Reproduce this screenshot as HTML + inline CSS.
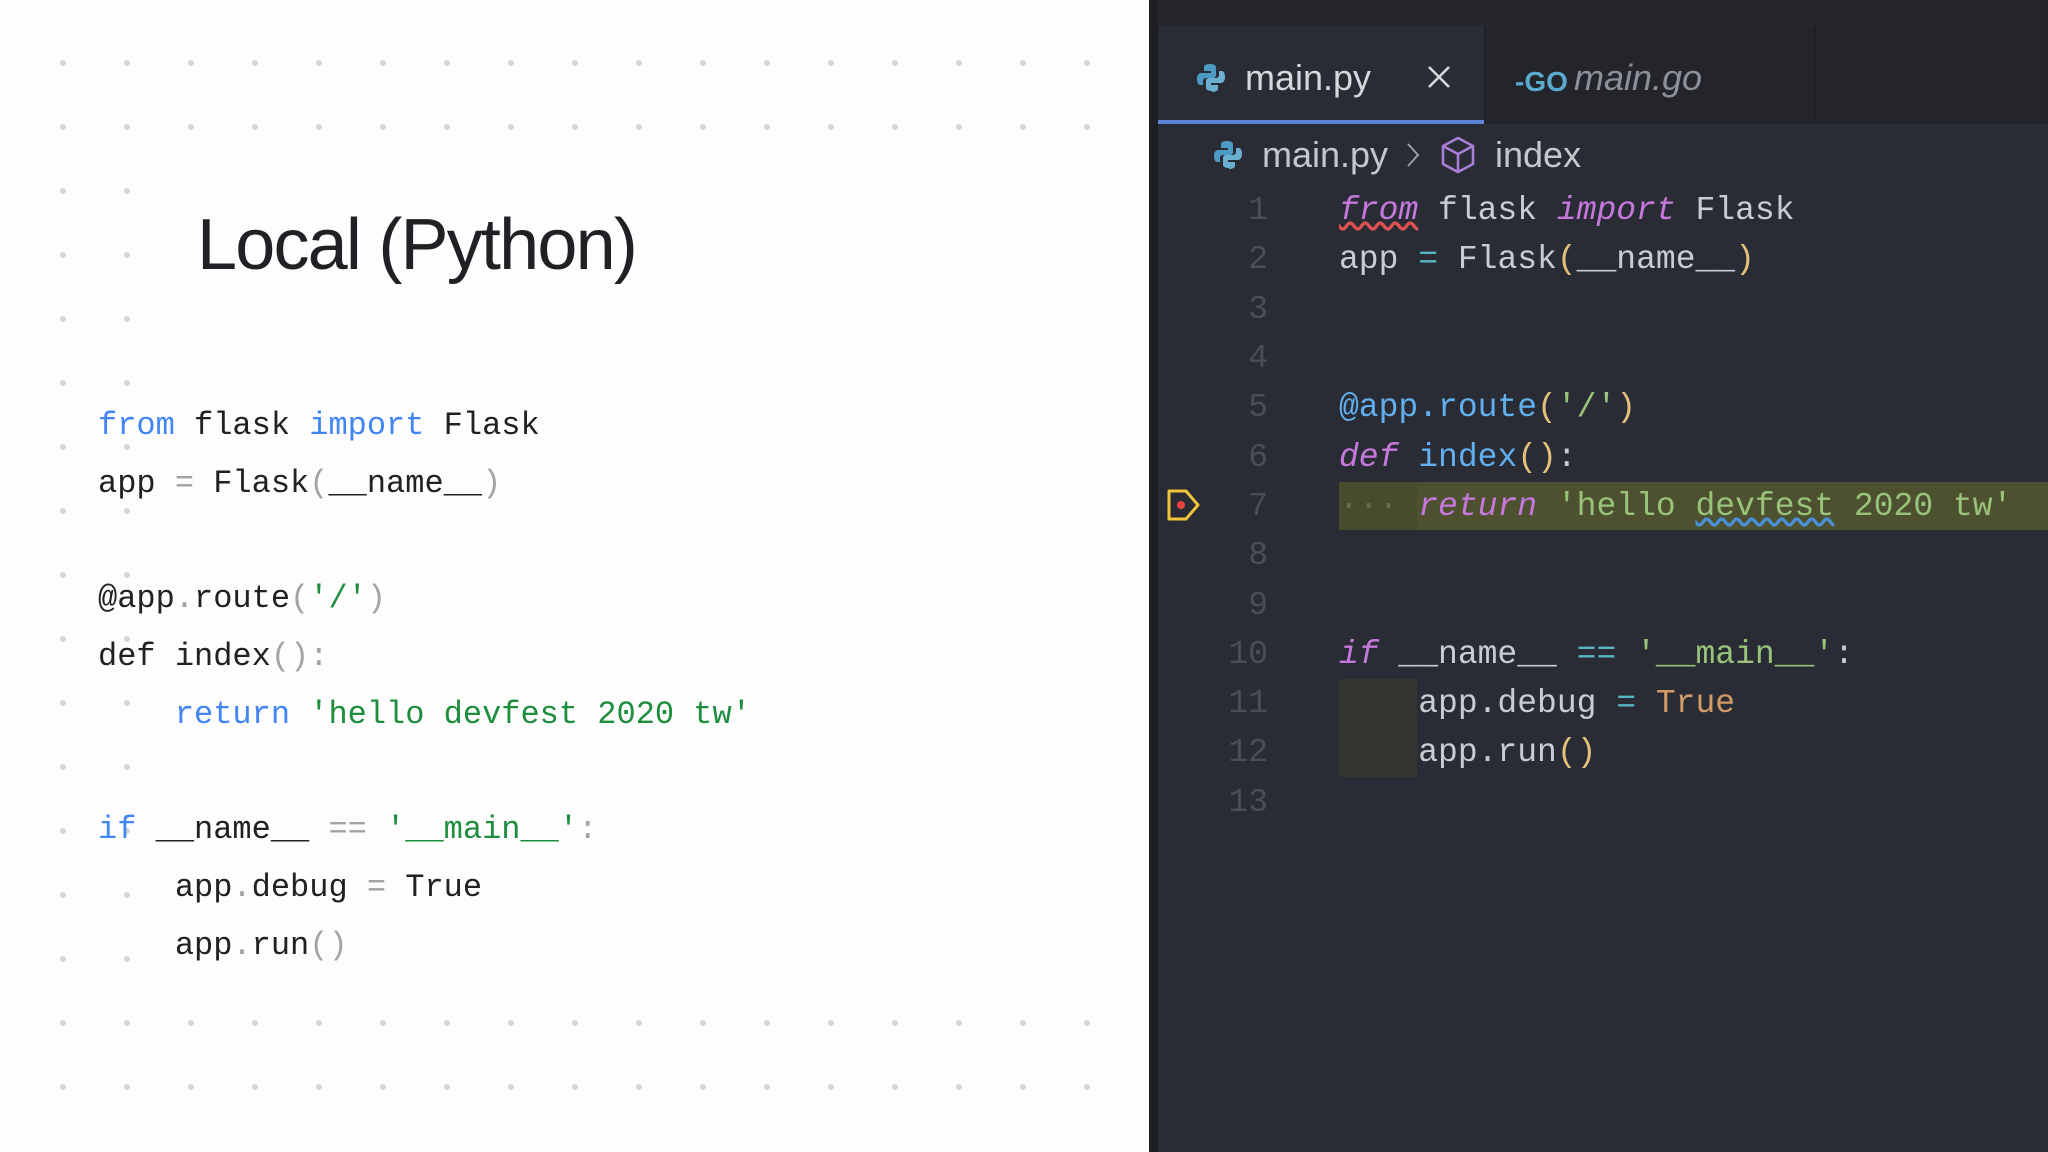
<!DOCTYPE html>
<html><head><meta charset="utf-8"><style>
*{margin:0;padding:0;box-sizing:border-box}
body{width:2048px;height:1152px;overflow:hidden;position:relative;background:#fdfdfd;font-family:"Liberation Sans",sans-serif}
.dots{position:absolute;background-image:radial-gradient(circle,#d6d6d6 2.6px,transparent 3.4px);background-size:64px 64px}
.title{position:absolute;left:197px;top:200px;font-size:72px;color:#202124;letter-spacing:-1.8px;line-height:90px}
.lc{position:absolute;left:98px;font-family:"Liberation Mono",monospace;font-size:32px;color:#202124;white-space:pre;height:58px;line-height:58px}
.k{color:#4285f4}.s{color:#1e8e3e}.p{color:#a0a4a8}
.right{position:absolute;left:1149px;top:0;width:899px;height:1152px;background:#2a2c35}
.border{position:absolute;left:1149px;top:0;width:9px;height:1152px;background:#1d1f24}
.topbar{position:absolute;left:1158px;top:0;width:890px;height:26px;background:#25272d}
.tabbar{position:absolute;left:1158px;top:26px;width:890px;height:98px;background:#23252b}
.tab1{position:absolute;left:1158px;top:26px;width:326px;height:98px;background:#2a2c35;border-bottom:4px solid #5a84d6}
.sep{position:absolute;top:26px;width:2px;height:98px;background:#1e2025}
.ui{position:absolute;font-size:36px;color:#d6d8dc;line-height:40px}
.ln{position:absolute;width:118px;left:1150px;text-align:right;font-family:"Liberation Mono",monospace;font-size:33px;color:#4a4e58;height:49.3px;line-height:49.3px}
.rc{position:absolute;left:1339px;font-family:"Liberation Mono",monospace;font-size:33px;color:#c9ccd3;white-space:pre;height:49.3px;line-height:49.3px}
.pk{color:#c678dd;font-style:italic}.eq{color:#56b6c2}.py{color:#e5c07b}.bl{color:#61afef}.gr{color:#98c379}.or{color:#d19a66}.ws{color:#6a6e55}
</style></head><body>
<div class="dots" style="left:31px;top:31px;width:1088px;height:128px"></div>
<div class="dots" style="left:31px;top:159px;width:128px;height:832px"></div>
<div class="dots" style="left:31px;top:991px;width:1088px;height:128px"></div>
<div class="title">Local (Python)</div>
<div class="lc" style="top:397px"><span class="k">from</span> flask <span class="k">import</span> Flask</div>
<div class="lc" style="top:455px">app <span class="p">=</span> Flask<span class="p">(</span>__name__<span class="p">)</span></div>
<div class="lc" style="top:570px">@app<span class="p">.</span>route<span class="p">(</span><span class="s">'/'</span><span class="p">)</span></div>
<div class="lc" style="top:628px">def index<span class="p">():</span></div>
<div class="lc" style="top:686px">    <span class="k">return</span> <span class="s">'hello devfest 2020 tw'</span></div>
<div class="lc" style="top:801px"><span class="k">if</span> __name__ <span class="p">==</span> <span class="s">'__main__'</span><span class="p">:</span></div>
<div class="lc" style="top:859px">    app<span class="p">.</span>debug <span class="p">=</span> True</div>
<div class="lc" style="top:917px">    app<span class="p">.</span>run<span class="p">()</span></div>

<div class="right"></div>
<div class="border"></div>
<div class="topbar"></div>
<div class="tabbar"></div>
<div class="tab1"></div>
<div class="sep" style="left:1484px"></div>
<div class="sep" style="left:1814px"></div>
<svg style="position:absolute;left:1196px;top:62px" width="30" height="32" viewBox="0 0 30 32"><path d="M14 2c-6 0-6 3-6 3v4h7v2H5s-4 0-4 6 3 6 3 6h3v-4s0-3 3-3h7s3 0 3-3V5s0-3-6-3z" fill="#4b9bc4"/><path d="M16 30c6 0 6-3 6-3v-4h-7v-2h10s4 0 4-6-3-6-3-6h-3v4s0 3-3 3h-7s-3 0-3 3v7s0 3 6 3z" fill="#6aaed0"/></svg>
<div class="ui" style="left:1245px;top:58px">main.py</div>
<svg style="position:absolute;left:1427px;top:65px" width="24" height="24" viewBox="0 0 24 24"><path d="M2 2L22 22M22 2L2 22" stroke="#d6d8dc" stroke-width="2.6"/></svg>
<div class="ui" style="left:1515px;top:62px;color:#5aa9cf;font-weight:bold;font-size:28px">-GO</div>
<div class="ui" style="left:1574px;top:58px;color:#8d9099;font-style:italic">main.go</div>
<svg style="position:absolute;left:1213px;top:139px" width="30" height="32" viewBox="0 0 30 32"><path d="M14 2c-6 0-6 3-6 3v4h7v2H5s-4 0-4 6 3 6 3 6h3v-4s0-3 3-3h7s3 0 3-3V5s0-3-6-3z" fill="#4b9bc4"/><path d="M16 30c6 0 6-3 6-3v-4h-7v-2h10s4 0 4-6-3-6-3-6h-3v4s0 3-3 3h-7s-3 0-3 3v7s0 3 6 3z" fill="#6aaed0"/></svg>
<div class="ui" style="left:1262px;top:135px;color:#c4c7cc">main.py</div>
<svg style="position:absolute;left:1405px;top:140px" width="16" height="30" viewBox="0 0 16 30"><path d="M3 4L13 15L3 26" stroke="#9a9da4" stroke-width="2" fill="none"/></svg>
<svg style="position:absolute;left:1440px;top:135px" width="36" height="40" viewBox="0 0 36 40"><path d="M18 3L33 11V29L18 37L3 29V11Z M3 11L18 19L33 11 M18 19V37" stroke="#a87fd8" stroke-width="2.6" fill="none" stroke-linejoin="round"/></svg>
<div class="ui" style="left:1495px;top:135px;color:#c4c7cc">index</div>

<div style="position:absolute;left:1339px;top:482px;width:709px;height:48px;background:#4d5130"></div>
<div style="position:absolute;left:1339px;top:482px;width:78px;height:48px;background:#484b2c"></div>
<div style="position:absolute;left:1339px;top:679px;width:78px;height:98px;background:#33362f"></div>
<svg style="position:absolute;left:1166px;top:488px" width="36" height="34" viewBox="0 0 36 34"><path d="M3 3H20L32 17L20 31H3Z" stroke="#f0c53a" stroke-width="3" fill="none" stroke-linejoin="round"/><circle cx="15" cy="17" r="4" fill="#e8443a"/></svg>

<div class="ln" style="top:186px">1</div><div class="ln" style="top:235px">2</div><div class="ln" style="top:285px">3</div><div class="ln" style="top:334px">4</div><div class="ln" style="top:383px">5</div><div class="ln" style="top:433px">6</div><div class="ln" style="top:482px">7</div><div class="ln" style="top:531px">8</div><div class="ln" style="top:581px">9</div><div class="ln" style="top:630px">10</div><div class="ln" style="top:679px">11</div><div class="ln" style="top:728px">12</div><div class="ln" style="top:778px">13</div>

<div class="rc" style="top:186px"><span class="pk" style="text-decoration:underline wavy #e05252">from</span> flask <span class="pk">import</span> Flask</div>
<div class="rc" style="top:235px">app <span class="eq">=</span> Flask<span class="py">(</span>__name__<span class="py">)</span></div>
<div class="rc" style="top:383px"><span class="bl">@app.route</span><span class="py">(</span><span class="gr">'/'</span><span class="py">)</span></div>
<div class="rc" style="top:433px"><span class="pk">def</span> <span class="bl">index</span><span class="py">()</span>:</div>
<div class="rc" style="top:482px"><span class="ws">···</span> <span class="pk">return</span> <span class="gr">'hello <span style="text-decoration:underline wavy #4a90d9">devfest</span> 2020 tw'</span></div>
<div class="rc" style="top:630px"><span class="pk">if</span> __name__ <span class="eq">==</span> <span class="gr">'__main__'</span>:</div>
<div class="rc" style="top:679px">    app.debug <span class="eq">=</span> <span class="or">True</span></div>
<div class="rc" style="top:728px">    app.run<span class="py">()</span></div>
</body></html>
